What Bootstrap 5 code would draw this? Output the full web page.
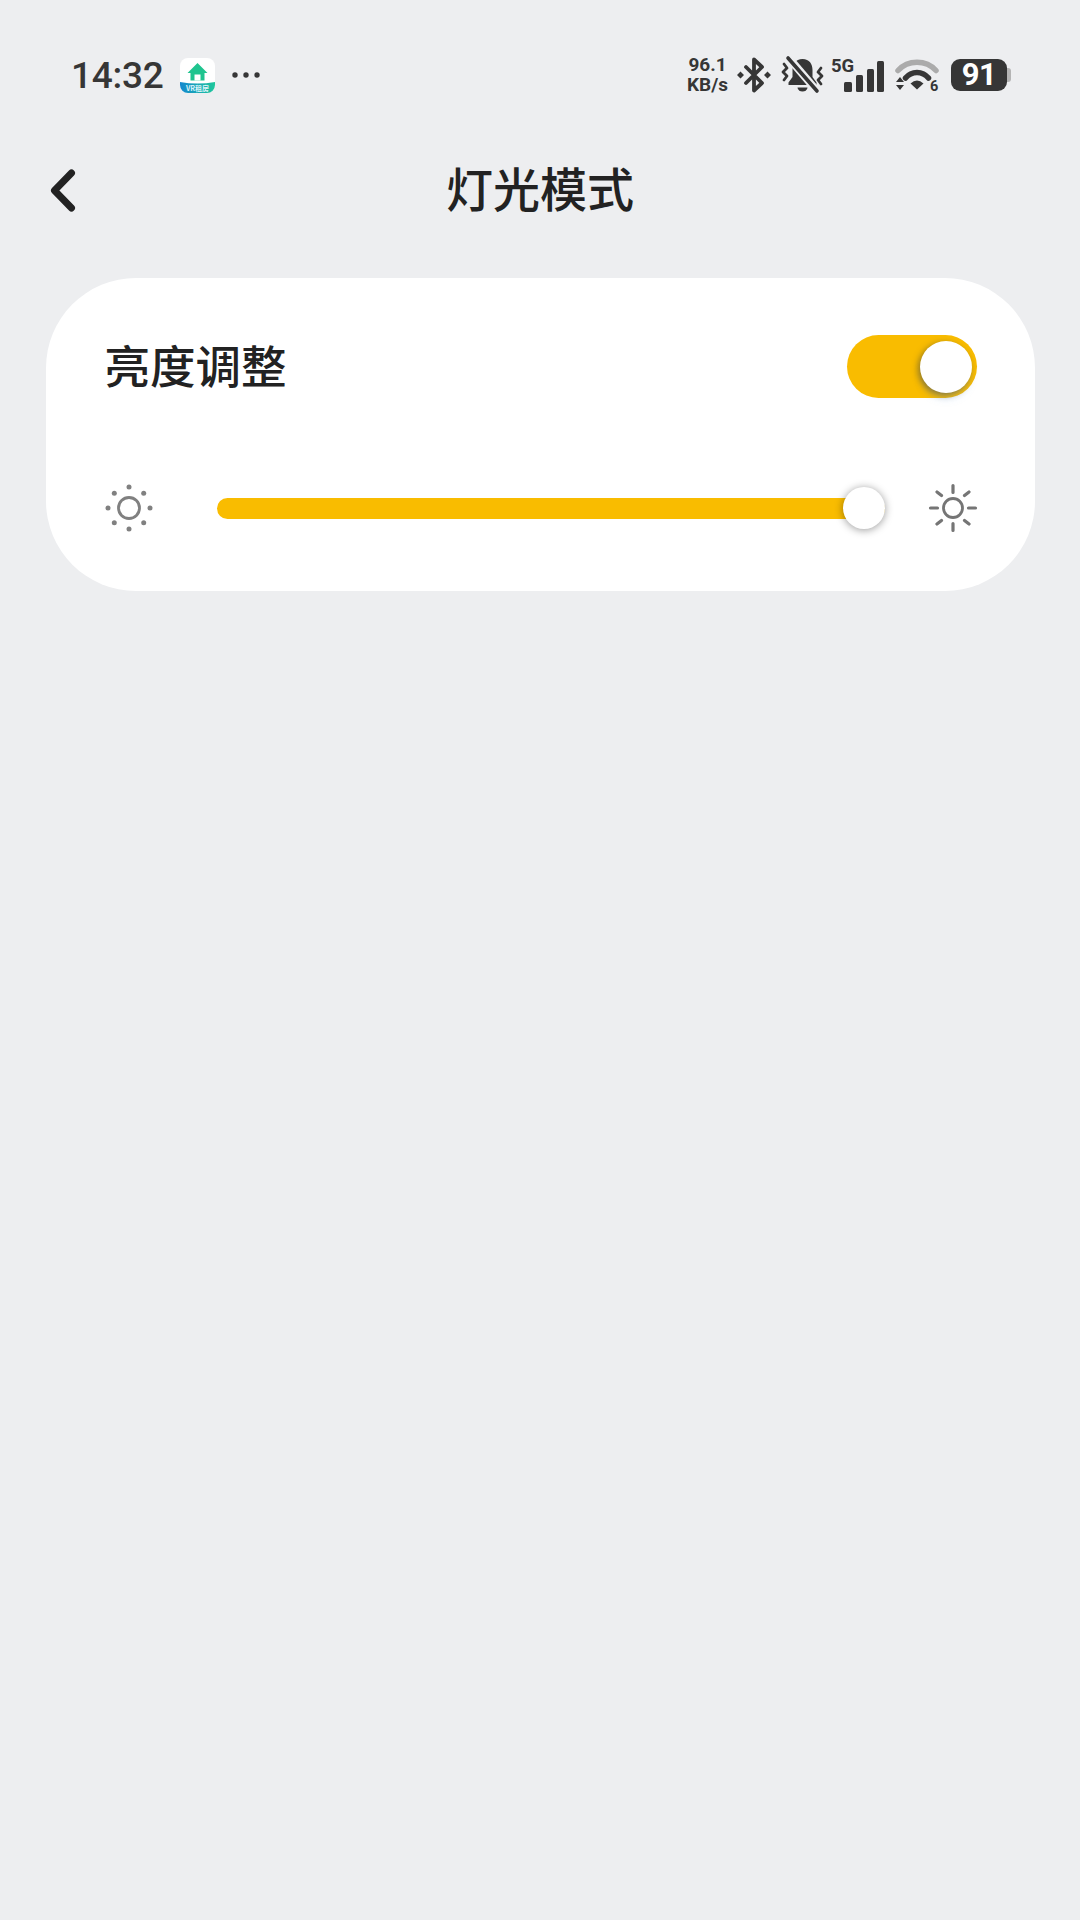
<!DOCTYPE html>
<html lang="zh-CN">
<head>
    <meta charset="UTF-8">
    <meta name="viewport" content="width=device-width, initial-scale=1.0">
    <title>灯光模式</title>
    <link rel="stylesheet" href="https://cdn.jsdelivr.net/npm/bootstrap@5.3.0/dist/css/bootstrap.min.css">
    <style>
        body { background: #edeef0; width: 1080px; height: 1920px; overflow: hidden; font-family: "Noto Sans CJK SC", "Liberation Sans", sans-serif; color: #222; }
        svg { display: block; flex: none; overflow: visible; }

        /* status bar */
        .status-row { height: 70px; margin-top: 40px; padding: 0 69px 0 71px; color: #363636; font-family: Roboto, "Liberation Sans", sans-serif; }
        .status-left { gap: 17px; }
        .clock-text { font-size: 37px; font-weight: 500; line-height: 1; letter-spacing: -.3px; }
        .speed-text { margin-right: 9px; font-size: 19px; font-weight: 700; line-height: 20px; text-align: center; white-space: nowrap; }
        .icon-bt { margin-right: 10px; }
        .icon-bell { margin-right: 7px; }
        .icon-wifi, .power-box { margin-left: 11px; }
        .power-box { width: 56px; height: 32px; border-radius: 9px; background: #363636; color: #fff; font-size: 31px; font-weight: 700; line-height: 32px; letter-spacing: -.5px; text-align: center; }
        .power-nub { width: 4px; height: 14px; border-radius: 0 3px 3px 0; background: #b4b4b4; }

        /* title */
        .title-row { display: grid; grid-template-columns: 1fr auto 1fr; align-items: center; height: 100px; margin-top: 30px; padding: 0 47px; }
        .title-text { font-size: 47px; font-weight: 500; line-height: 1; margin-top: -7px; }

        /* panel */
        .light-panel { margin: 38px 45px 0 46px; padding: 57px 58px 59px 59px; border-radius: 90px; background: #fff; }
        .panel-label { font-size: 45.500px; font-weight: 500; line-height: 59px; margin-bottom: 4px; margin-left: -.5px; }
        .amber-switch { width: 130px; height: 63px; padding: 0 5px; border-radius: 32px; background: #f9bc00; }
        .switch-knob { width: 52px; height: 52px; border-radius: 50%; background: #fff; box-shadow: -2px 2px 6px rgba(80, 75, 50, .6), 0 8px 10px -4px rgba(120, 170, 230, .35); }
        .slider-row { height: 48px; margin-top: 86px; }
        .light-range { width: 669px; height: 48px; margin-left: 64px; margin-right: 44px; padding: 0; display: block; }
        .light-range::-webkit-slider-runnable-track { height: 21px; border-radius: 11px; background: #f9bc00; }
        .light-range::-webkit-slider-thumb { -webkit-appearance: none; appearance: none; width: 42px; height: 42px; margin-top: -10.5px; border: 0; border-radius: 50%; background: #fff; box-shadow: 0 1px 9px rgba(0, 0, 0, .4); }
    </style>
</head>
<body>
    <!-- Status bar -->
    <div class="status-row d-flex align-items-center justify-content-between">
        <div class="status-left d-flex align-items-center">
            <span class="clock-text">14:32</span>
            <svg width="35" height="35" viewBox="0 0 35 35">
                <defs>
                    <linearGradient id="bandFill" x1="0" x2="1" y1="0" y2="0">
                        <stop offset="0" stop-color="#1688cf"/>
                        <stop offset="1" stop-color="#1fc79b"/>
                    </linearGradient>
                </defs>
                <rect width="35" height="35" rx="8" fill="#fff"/>
                <path d="M0 24q17.500 3 35 0v3a8 8 0 0 1-8 8H8a8 8 0 0 1-8-8z" fill="url(#bandFill)"/>
                <path d="M17.500 5 7.500 15h3v7.500h14V15h3z" fill="#1fc48f"/>
                <rect x="14.500" y="16.500" width="6" height="6" fill="#fff"/>
                <text x="17.500" y="33" text-anchor="middle" font-size="7" font-weight="700" fill="#dff4fb" font-family="'Noto Sans CJK SC', sans-serif">VR租房</text>
            </svg>
            <svg width="28" height="6" viewBox="0 0 28 6" fill="#363636">
                <circle cx="3" cy="3" r="2.700"/><circle cx="14" cy="3" r="2.700"/><circle cx="25" cy="3" r="2.700"/>
            </svg>
        </div>
        <div class="d-flex align-items-center">
            <div class="speed-text"><div>96.1</div><div>KB/s</div></div>
            <svg class="icon-bt" width="34" height="36" viewBox="0 0 34 36" fill="none" stroke="#363636" stroke-width="3.800" stroke-linejoin="round" stroke-linecap="round">
                <path d="M9 10 25 26 17 33.500V2.500L25 10 9 26"/>
                <path d="M3.500 14.500 7 18 3.500 21.500 0 18zM30.500 14.500 34 18 30.500 21.500 27 18z" fill="#363636" stroke="none"/>
            </svg>
            <svg class="icon-bell" width="43" height="38" viewBox="0 0 43 38" fill="none">
                <path d="M21.500 3c-7 0-10 5-10 11v7l-4 5.500v2.500h28v-2.500l-4-5.500v-7c0-6-3-11-10-11z" fill="#363636"/>
                <path d="M16.500 31.500h10a5 4 0 0 1-10 0z" fill="#363636"/>
                <path d="M7 1 36 35" stroke="#edeef0" stroke-width="8"/>
                <path d="M7 2 36 35" stroke="#363636" stroke-width="3.600" stroke-linecap="round"/>
                <path d="M3 8 6 12 2 16 6 20 3 24M40 12 37 16 41 20 37 24 40 28" stroke="#363636" stroke-width="2.800" stroke-linecap="round" stroke-linejoin="round"/>
            </svg>
            <svg width="53" height="38" viewBox="0 0 53 38" fill="#363636">
                <text x="0" y="16" font-size="18.500" font-weight="700" font-family="Roboto, sans-serif">5G</text>
                <rect x="13" y="26" width="8" height="10" rx="1.500"/>
                <rect x="25" y="19" width="7" height="17" rx="1.500"/>
                <rect x="36" y="13" width="7" height="23" rx="1.500"/>
                <rect x="46" y="5" width="7" height="31" rx="1.500"/>
            </svg>
            <svg class="icon-wifi" width="45" height="34" viewBox="0 0 45 34" fill="none">
                <path d="M3 12.500C13 1.500 31 1.500 41 12.500" stroke="#ababab" stroke-width="5.500" stroke-linecap="round"/>
                <path d="M10.500 20C16.500 12.500 27.500 12.500 33.500 20" stroke="#363636" stroke-width="5.500" stroke-linecap="round"/>
                <path d="M15.500 25.500Q22 19.500 28.500 25.500L22 31.500z" fill="#363636"/>
                <path d="M1 24 5 19 9 24zM1 27 5 32 9 27z" fill="#363636"/>
                <text x="35" y="32.500" font-size="14.500" font-weight="700" fill="#363636" font-family="Roboto, sans-serif">6</text>
            </svg>
            <div class="power-box">91</div>
            <div class="power-nub"></div>
        </div>
    </div>

    <!-- Title -->
    <div class="title-row">
        <svg width="32" height="48" viewBox="0 0 32 48" fill="none" stroke="#222" stroke-width="7" stroke-linecap="round" stroke-linejoin="round">
            <path d="M24.500 7 7.500 24.500 24.500 42"/>
        </svg>
        <div class="title-text">灯光模式</div>
        <div></div>
    </div>

    <!-- Brightness panel -->
    <div class="light-panel">
        <div class="d-flex align-items-center justify-content-between">
            <div class="panel-label">亮度调整</div>
            <div class="amber-switch d-flex align-items-center justify-content-end">
                <div class="switch-knob"></div>
            </div>
        </div>
        <div class="slider-row d-flex align-items-center">
            <svg width="48" height="48" viewBox="0 0 48 48" fill="#808080">
                <circle cx="24" cy="24" r="10.500" fill="none" stroke="#808080" stroke-width="2.800"/>
                <circle cx="24" cy="3" r="2.500"/><circle cx="24" cy="45" r="2.500"/>
                <circle cx="3" cy="24" r="2.500"/><circle cx="45" cy="24" r="2.500"/>
                <circle cx="9.300" cy="9.300" r="2.500"/><circle cx="38.700" cy="9.300" r="2.500"/>
                <circle cx="9.300" cy="38.700" r="2.500"/><circle cx="38.700" cy="38.700" r="2.500"/>
            </svg>
            <input type="range" class="form-range light-range" min="0" max="100" value="100">
            <svg width="48" height="48" viewBox="0 0 48 48" fill="none" stroke="#757575" stroke-linecap="round">
                <circle cx="24" cy="24" r="9.500" stroke-width="2.800"/>
                <path stroke-width="3.200" d="M24 1.500v7M24 39.500v7M1.500 24h7M39.500 24h7M8 8l4.500 3.500M40 8l-4.500 3.500M8 40l4.500-3.500M40 40l-4.500-3.500"/>
            </svg>
        </div>
    </div>

    <script src="https://cdn.jsdelivr.net/npm/bootstrap@5.3.0/dist/js/bootstrap.bundle.min.js"></script>
</body>
</html>
